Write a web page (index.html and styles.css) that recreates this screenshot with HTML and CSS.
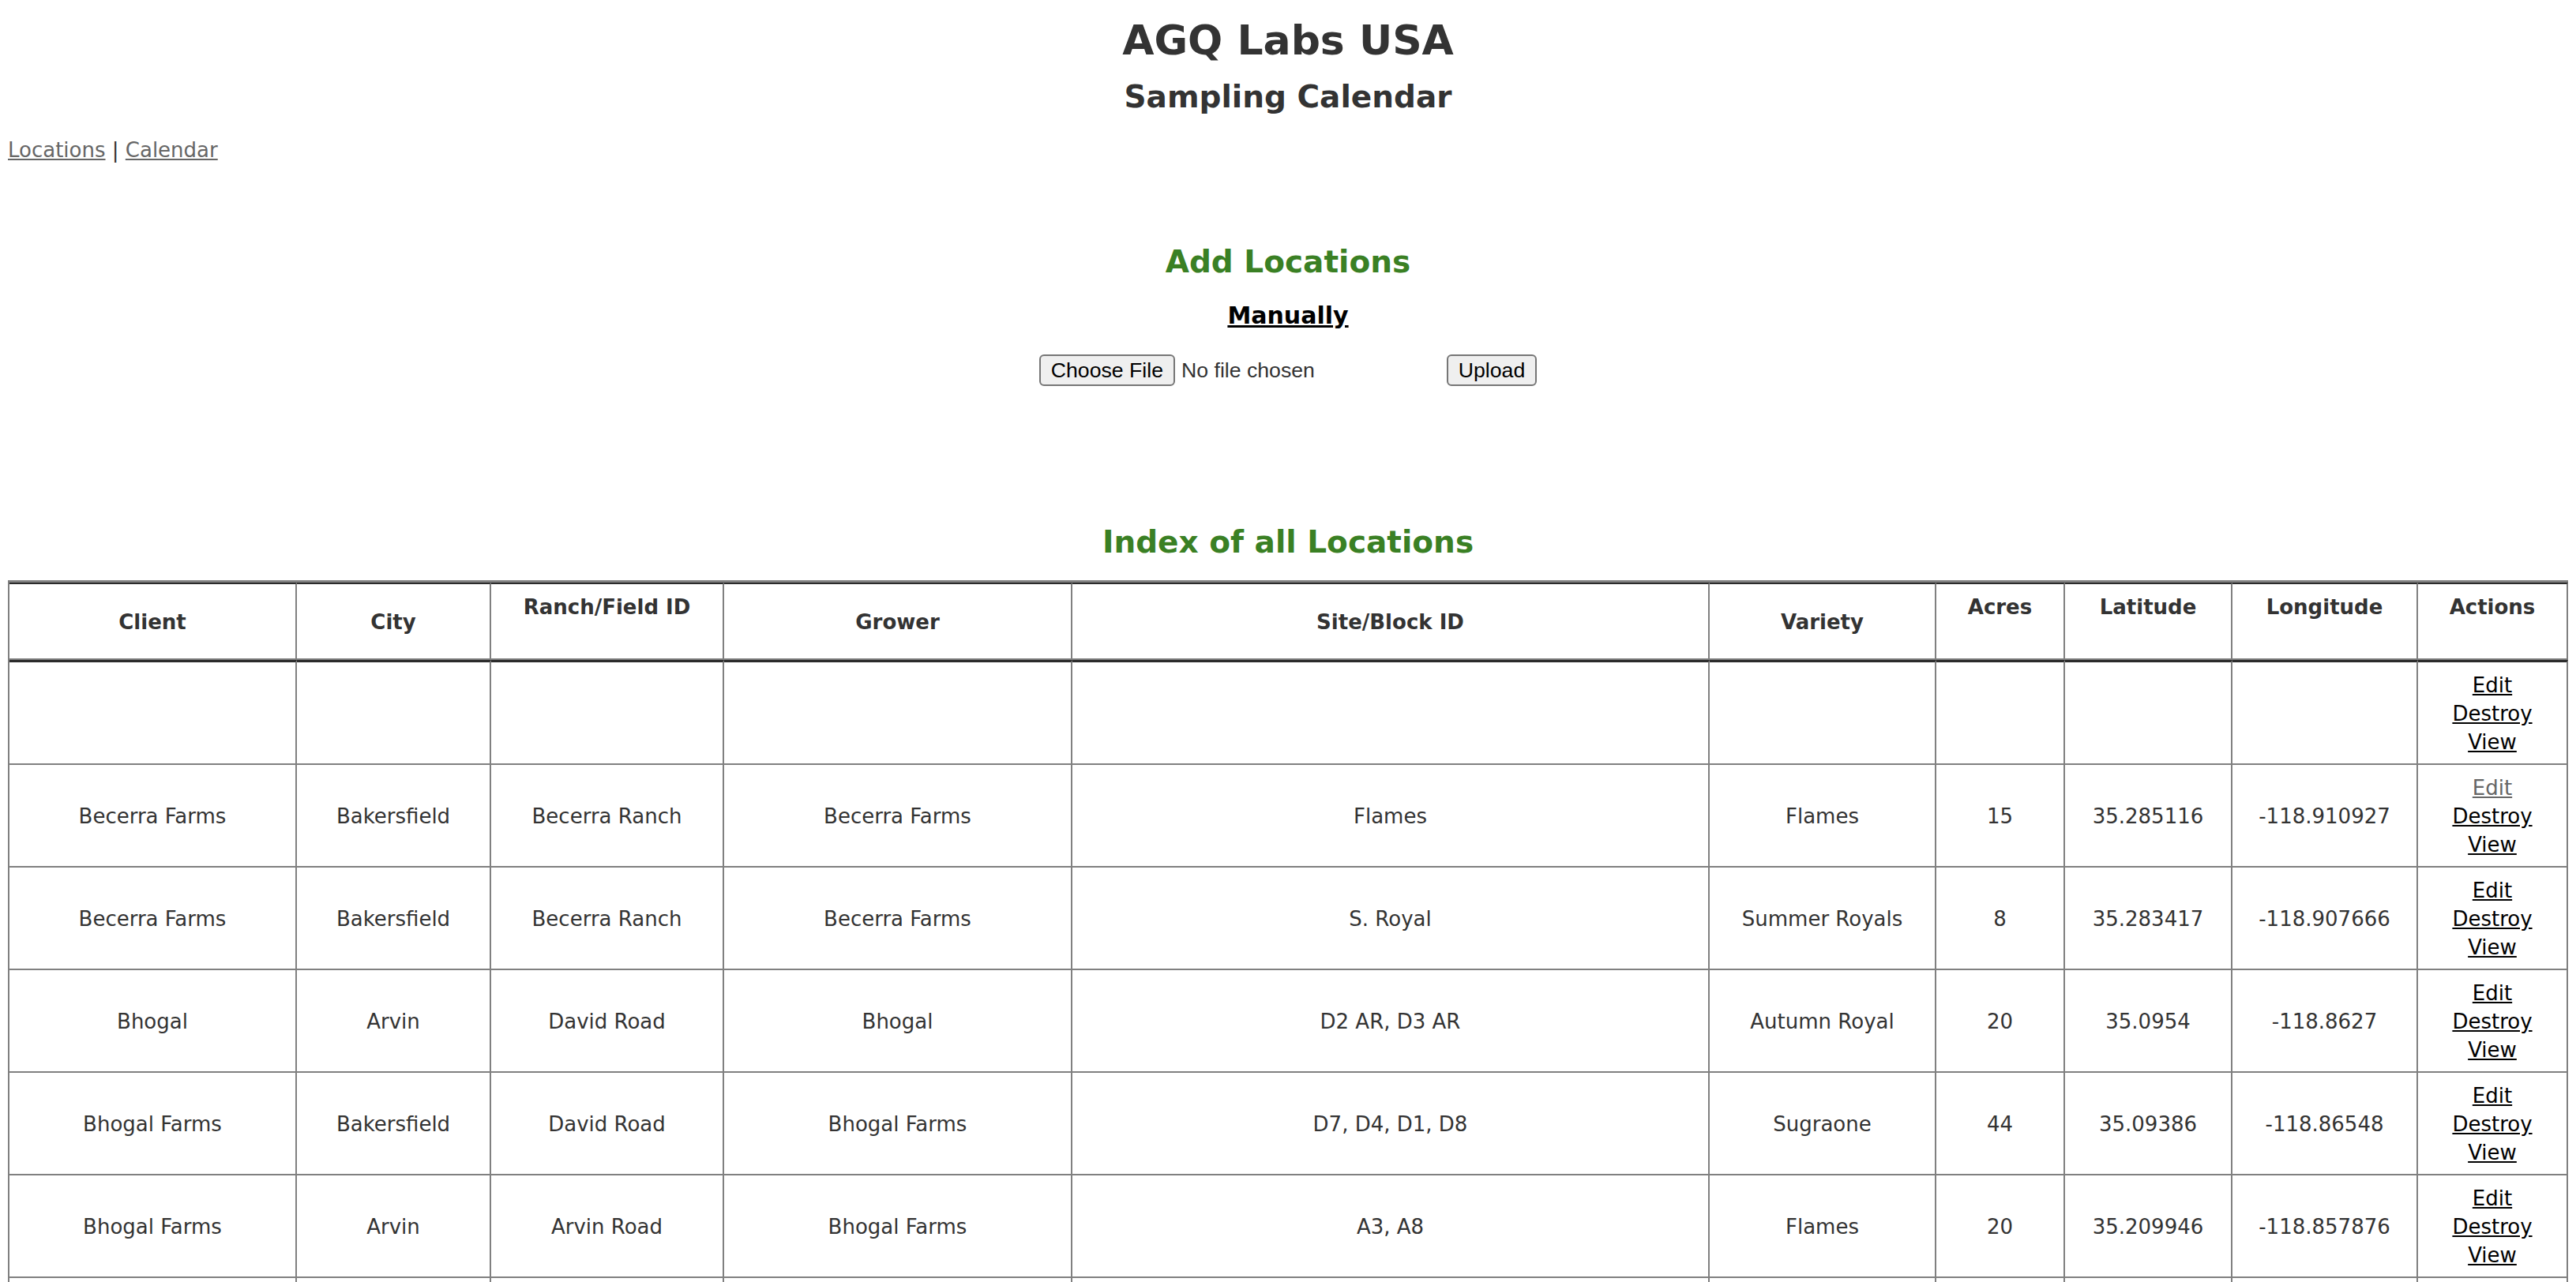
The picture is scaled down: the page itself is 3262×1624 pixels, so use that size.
FILE: index.html
```html
<!DOCTYPE html>
<html lang="en">
<head>
<meta charset="utf-8">
<title>AGQ Labs USA - Sampling Calendar</title>
<link rel="stylesheet" href="styles.css">
</head>
<body>
<header class="site-header">
  <h1 class="site-title">AGQ Labs USA</h1>
  <h2 class="site-subtitle">Sampling Calendar</h2>
</header>
<nav class="main-nav">
  <a class="visited" href="#locations">Locations</a> | <a class="visited" href="#calendar">Calendar</a>
</nav>

<section class="add-section">
  <h2 class="section-title add-title">Add Locations</h2>
  <h3 class="manual-title"><a href="#new">Manually</a></h3>
  <form class="upload-form" onsubmit="return false;">
    <input class="file-input" type="file" name="file">
    <button class="upload-btn" type="submit">Upload</button>
  </form>
</section>

<section class="index-section">
  <h2 class="section-title index-title">Index of all Locations</h2>
  <table class="locations">
    <colgroup>
      <col class="c-client"><col class="c-city"><col class="c-ranch"><col class="c-grower"><col class="c-site"><col class="c-variety"><col class="c-acres"><col class="c-lat"><col class="c-lng"><col class="c-actions">
    </colgroup>
    <thead>
      <tr>
        <th>Client</th>
        <th>City</th>
        <th class="th-top">Ranch/Field ID</th>
        <th>Grower</th>
        <th>Site/Block ID</th>
        <th>Variety</th>
        <th class="th-top">Acres</th>
        <th class="th-top">Latitude</th>
        <th class="th-top">Longitude</th>
        <th class="th-top">Actions</th>
      </tr>
    </thead>
    <tbody>
      <tr>
        <td></td><td></td><td></td><td></td><td></td><td></td><td></td><td></td><td></td>
        <td class="actions"><a href="#">Edit</a><a href="#">Destroy</a><a href="#">View</a></td>
      </tr>
      <tr>
        <td>Becerra Farms</td><td>Bakersfield</td><td>Becerra Ranch</td><td>Becerra Farms</td><td>Flames</td><td>Flames</td><td>15</td><td>35.285116</td><td>-118.910927</td>
        <td class="actions"><a class="visited" href="#">Edit</a><a href="#">Destroy</a><a href="#">View</a></td>
      </tr>
      <tr>
        <td>Becerra Farms</td><td>Bakersfield</td><td>Becerra Ranch</td><td>Becerra Farms</td><td>S. Royal</td><td>Summer Royals</td><td>8</td><td>35.283417</td><td>-118.907666</td>
        <td class="actions"><a href="#">Edit</a><a href="#">Destroy</a><a href="#">View</a></td>
      </tr>
      <tr>
        <td>Bhogal</td><td>Arvin</td><td>David Road</td><td>Bhogal</td><td>D2 AR, D3 AR</td><td>Autumn Royal</td><td>20</td><td>35.0954</td><td>-118.8627</td>
        <td class="actions"><a href="#">Edit</a><a href="#">Destroy</a><a href="#">View</a></td>
      </tr>
      <tr>
        <td>Bhogal Farms</td><td>Bakersfield</td><td>David Road</td><td>Bhogal Farms</td><td>D7, D4, D1, D8</td><td>Sugraone</td><td>44</td><td>35.09386</td><td>-118.86548</td>
        <td class="actions"><a href="#">Edit</a><a href="#">Destroy</a><a href="#">View</a></td>
      </tr>
      <tr>
        <td>Bhogal Farms</td><td>Arvin</td><td>Arvin Road</td><td>Bhogal Farms</td><td>A3, A8</td><td>Flames</td><td>20</td><td>35.209946</td><td>-118.857876</td>
        <td class="actions"><a href="#">Edit</a><a href="#">Destroy</a><a href="#">View</a></td>
      </tr>
      <tr>
        <td>Bhogal Farms</td><td>Bakersfield</td><td>Bear Mountain</td><td>Bhogal Farms</td><td>B1, B2</td><td>Sugraone</td><td>32</td><td>35.201431</td><td>-118.842115</td>
        <td class="actions"><a href="#">Edit</a><a href="#">Destroy</a><a href="#">View</a></td>
      </tr>
    </tbody>
  </table>
</section>
</body>
</html>
```

FILE: styles.css
```css
html, body {
  background: #fff;
}

body {
  margin: 0 10px 20px;
  color: #333;
  font-family: "DejaVu Sans", Verdana, sans-serif;
  font-size: 26px;
  line-height: 36px;
}

a {
  color: #000;
  text-decoration: underline;
}

a.visited {
  color: #666;
}

.site-header {
  text-align: center;
}

.site-title {
  margin: 21px 0 0;
  font-size: 52px;
  line-height: 60px;
  font-weight: bold;
  color: #333;
}

.site-subtitle {
  margin: 19px 0 0;
  font-size: 39px;
  line-height: 46px;
  font-weight: bold;
  color: #333;
}

.main-nav {
  margin-top: 26px;
  line-height: 36px;
}

.add-section {
  text-align: center;
}

.section-title {
  font-size: 39px;
  line-height: 46px;
  font-weight: bold;
  color: #3a8024;
  text-align: center;
}

.add-title {
  margin: 101px 0 0;
}

.manual-title {
  margin: 27px 0 0;
  font-size: 30px;
  line-height: 36px;
  font-weight: bold;
}

.manual-title a {
  color: #000;
}

.upload-form {
  display: flex;
  justify-content: center;
  align-items: center;
  gap: 8px;
  margin-top: 31px;
}

.file-input {
  width: 508px;
  height: 40px;
  font-family: "Liberation Sans", Arial, sans-serif;
  font-size: 26.67px;
  color: #333;
}

.file-input::file-selector-button,
.upload-btn {
  box-sizing: border-box;
  height: 40px;
  padding: 0 13px;
  margin: 0;
  font-family: "Liberation Sans", Arial, sans-serif;
  font-size: 26.67px;
  color: #000;
  background: #efefef;
  border: 2px solid #767676;
  border-radius: 6px;
}

.file-input::file-selector-button {
  margin-right: 8px;
}

.index-title {
  margin: 175px 0 0;
}

.locations {
  width: 100%;
  margin-top: 25px;
  table-layout: fixed;
  border-collapse: separate;
  border-spacing: 0;
  border-top: 3px solid #808080;
  border-left: 2px solid #808080;
}

.c-client { width: 364px; }
.c-city { width: 246px; }
.c-ranch { width: 295px; }
.c-grower { width: 441px; }
.c-site { width: 807px; }
.c-variety { width: 287px; }
.c-acres { width: 163px; }
.c-lat { width: 212px; }
.c-lng { width: 235px; }
.c-actions { width: 190px; }

.locations th,
.locations td {
  border-right: 2px solid #808080;
  border-bottom: 2px solid #808080;
  padding: 10px;
  text-align: center;
  color: #333;
}

.locations th {
  box-sizing: border-box;
  height: 98px;
  padding-top: 11px;
  border-top: 2px solid #2b2b2b;
  font-weight: bold;
  vertical-align: middle;
}

.locations th.th-top {
  vertical-align: top;
}

.locations tbody tr:first-child td {
  border-top: 3px solid #2b2b2b;
}

.locations td {
  vertical-align: middle;
  height: 108px;
  padding-top: 11px;
  padding-bottom: 9px;
}

.actions a {
  display: block;
}
```
